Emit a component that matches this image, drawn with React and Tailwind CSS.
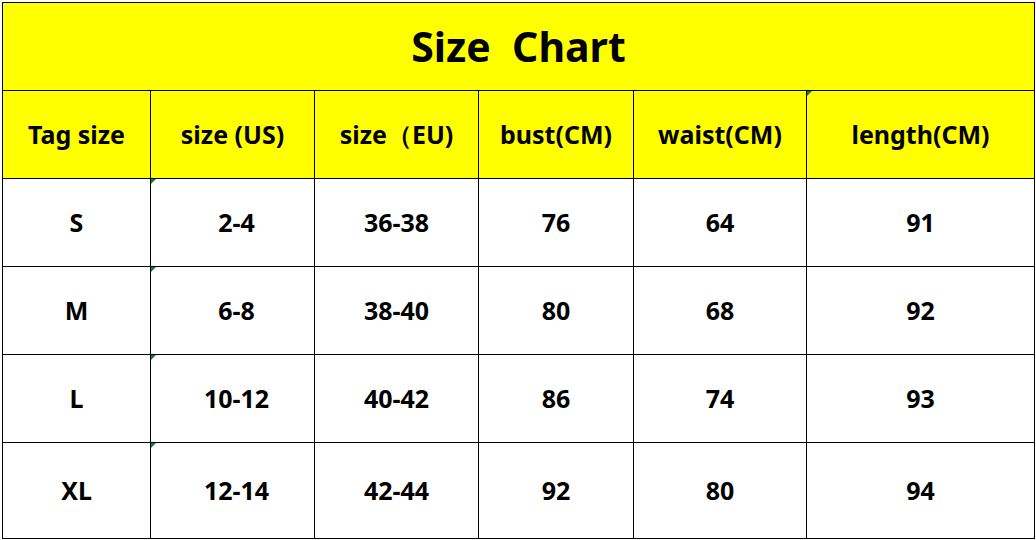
const headers = ["Tag size", "size (US)", "size（EU)", "bust(CM)", "waist(CM)", "length(CM)"];

const rows = [
  ["S", "2-4", "36-38", "76", "64", "91"],
  ["M", "6-8", "38-40", "80", "68", "92"],
  ["L", "10-12", "40-42", "86", "74", "93"],
  ["XL", "12-14", "42-44", "92", "80", "94"],
];

function Flag() {
  return (
    <span className="absolute left-0 top-0 h-0 w-0 border-r-[5px] border-t-[5px] border-r-transparent border-t-[#1f7a2e]" />
  );
}

export default function App() {
  return (
    <div className="h-[540px] w-[1036px] bg-white pl-[2px] pt-[2px]" style={{ fontFamily: '"Noto Sans", "Open Sans", sans-serif' }}>
      <div className="grid w-[1033px] grid-cols-[148px_164px_164px_155px_173px_228px] grid-rows-[88px_88px_88px_88px_88px_96px] border-l border-t border-black font-bold text-black">
        <div className="col-span-6 flex items-center justify-center border-b border-r border-black bg-[#ffff00] text-[41px] leading-none">
          <span className="whitespace-pre">Size  Chart</span>
        </div>

        {headers.map((h, i) => (
          <div key={h} className="relative flex items-center justify-center border-b border-r border-black bg-[#ffff00] text-[25px]">
            {i === 5 && <Flag />}
            {h}
          </div>
        ))}

        {rows.map((row) =>
          row.map((cell, i) => (
            <div key={row[0] + i} className="relative flex items-center justify-center border-b border-r border-black bg-white text-[25px]">
              {i === 1 && <Flag />}
              <span className={i === 1 ? "pl-2" : ""}>{cell}</span>
            </div>
          ))
        )}
      </div>
    </div>
  );
}
